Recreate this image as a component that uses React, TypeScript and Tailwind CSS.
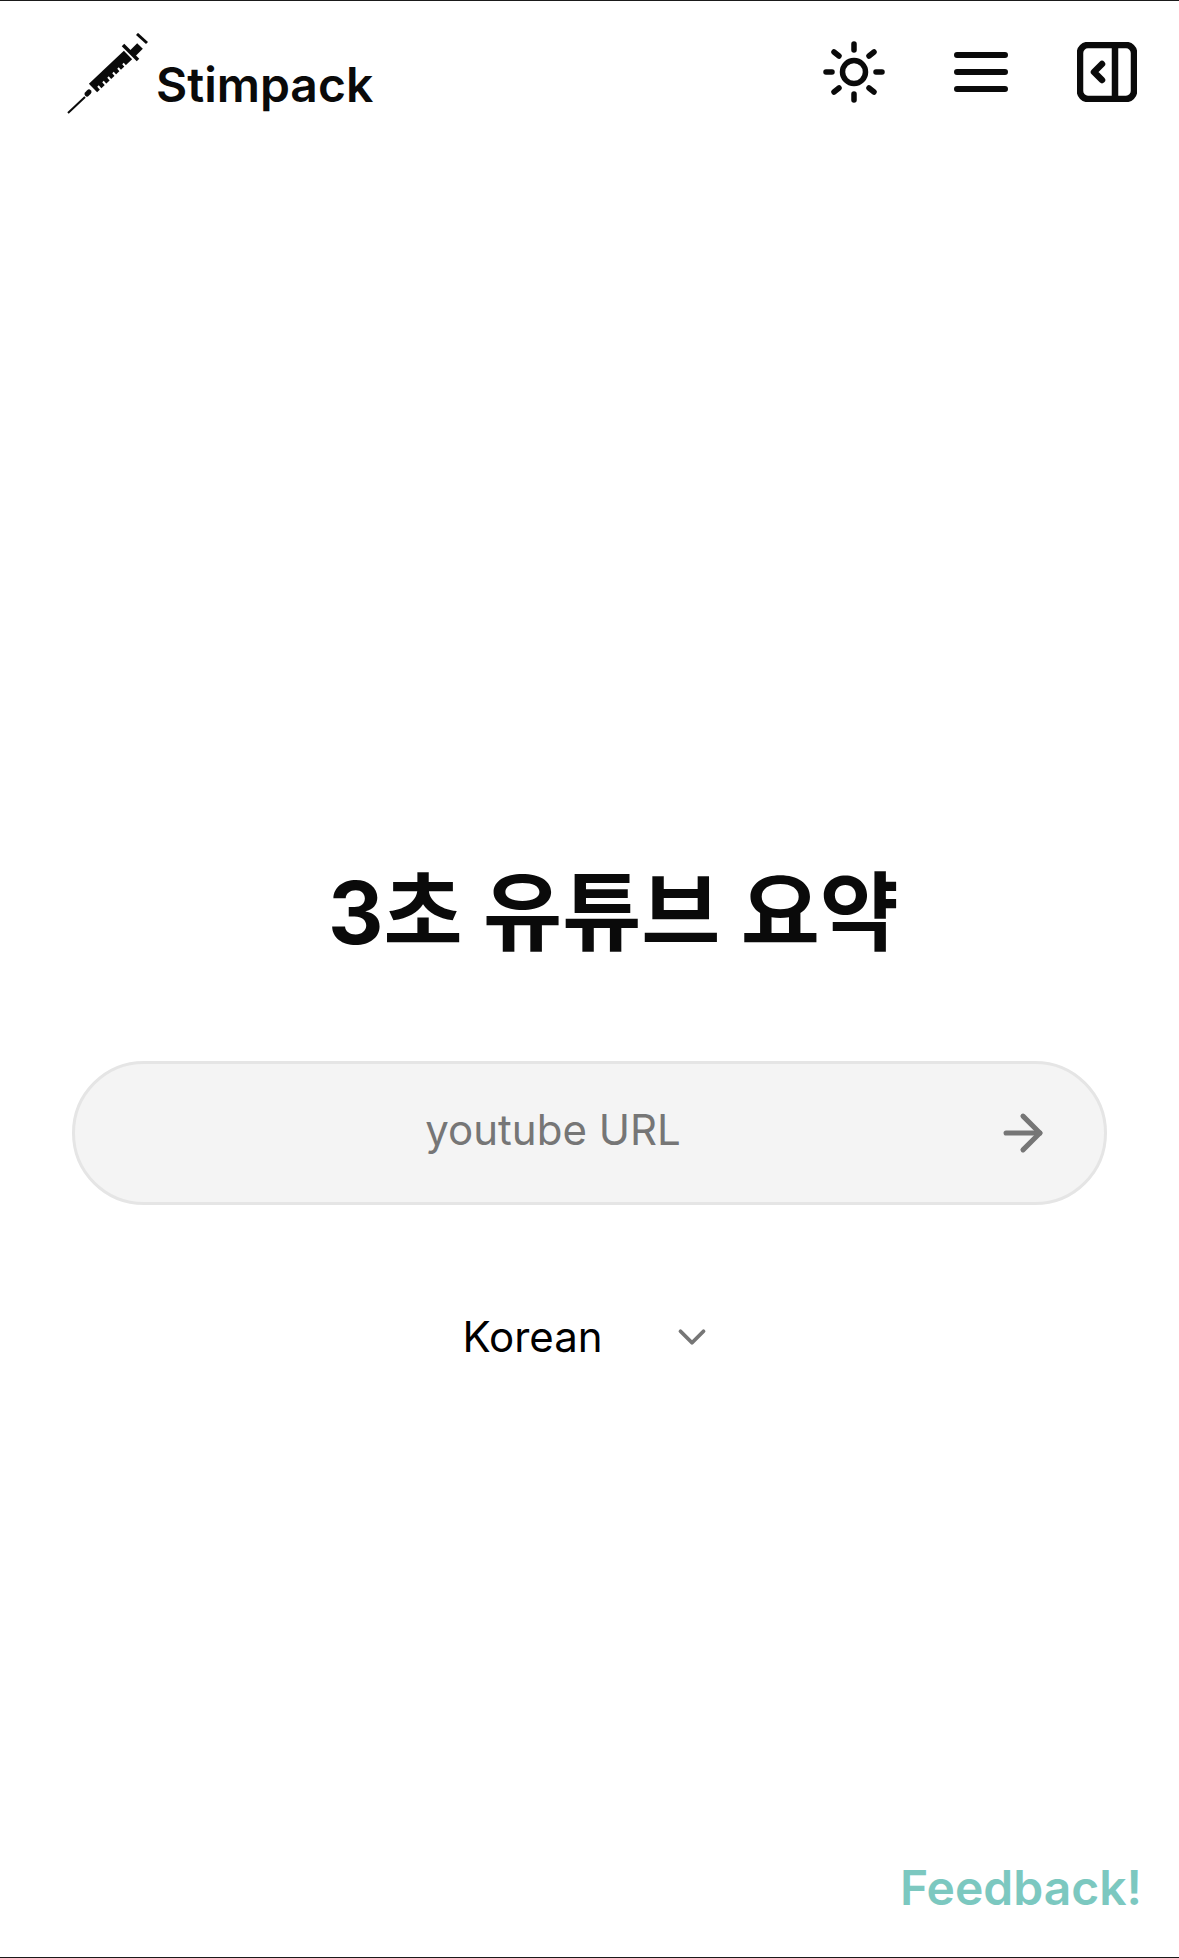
import { ArrowRight, ChevronDown } from 'lucide-react'

function SyringeLogo() {
  return (
    <svg viewBox="0 0 82 82" className="w-[82px] h-[82px]" fill="none">
      <g stroke="#0a0a0a" strokeLinecap="butt">
        <path d="M1 80 L18 64" strokeWidth="2" />
        <path d="M20 61 L22 59" strokeWidth="5" strokeLinecap="round" />
        <path d="M26 55 L61 22" strokeWidth="12" />
        <path d="M56 12 L71 27" strokeWidth="3.5" />
        <path d="M65 21 L73 13" strokeWidth="8" />
        <path d="M70 1 L80 10" strokeWidth="3" />
      </g>
      <path d="M31 53 l3.5 4 M36 48.5 l3.5 4 M41 44 l3.5 4 M46 39.5 l3.5 4 M51 35 l3.5 4 M56 30.5 l3.5 4" stroke="#fff" strokeWidth="2" />
    </svg>
  )
}

function SunIcon() {
  return (
    <svg viewBox="0 0 62 62" className="w-[62px] h-[62px]" fill="none" stroke="#0a0a0a" strokeWidth="5.5" strokeLinecap="round">
      <circle cx="31" cy="31" r="11.5" />
      <path d="M31 3v6M31 53v6M3 31h6M53 31h6M11 11l5 4M46 47l5 4M11 51l5-4M46 15l5-4" />
    </svg>
  )
}

function MenuIcon() {
  return (
    <svg viewBox="0 0 54 40" className="w-[54px] h-10" fill="none" stroke="#0a0a0a" strokeWidth="6" strokeLinecap="round">
      <path d="M3 3h48M3 20h48M3 37h48" />
    </svg>
  )
}

function PanelIcon() {
  return (
    <svg viewBox="0 0 60 60" className="w-[60px] h-[60px]" fill="none" stroke="#0a0a0a" strokeWidth="6.5" strokeLinecap="round" strokeLinejoin="round">
      <rect x="3" y="3" width="54" height="54" rx="8" />
      <path d="M38 3v54" strokeLinecap="butt" />
      <path d="M25 22l-8 8 8 8" />
    </svg>
  )
}

export default function App() {
  return (
    <div className="h-[1958px] bg-white border-y border-[#1a1a1a] flex flex-col font-['Inter','Noto_Sans_CJK_KR',sans-serif] text-[#0a0a0a]">
      <header className="flex items-start justify-between pl-[67px] pr-[42px] pt-[32px]">
        <div className="flex items-end gap-[7px]">
          <SyringeLogo />
          <span className="text-[48px] leading-[58px] font-semibold mb-[1px]">Stimpack</span>
        </div>
        <div className="flex items-center pt-[8px]">
          <SunIcon />
          <div className="ml-[69px]"><MenuIcon /></div>
          <div className="ml-[69px]"><PanelIcon /></div>
        </div>
      </header>

      <main className="flex-1 flex flex-col items-center pt-[748px]">
        <h1 className="text-[86px] leading-[100px] font-bold pl-[48px]">3초 유튜브 요약</h1>
        <div className="mt-[98px] w-[1035px] h-[144px] rounded-full bg-[#f4f4f4] border-[3px] border-[#e5e5e5] flex items-center pr-[52px]">
          <span className="flex-1 text-center text-[42px] text-[#767676] pl-[37px] mb-[7px]">youtube URL</span>
          <ArrowRight className="w-[58px] h-[58px] text-[#767676]" strokeWidth={2.1} />
        </div>
        <div className="mt-[107px] flex items-center gap-[66px] pr-[2px]">
          <span className="text-[42px] leading-[50px] text-black">Korean</span>
          <ChevronDown className="w-[46px] h-[46px] text-[#767676]" strokeWidth={2} />
        </div>
      </main>

      <footer className="flex justify-end pr-[37px] pb-[40px]">
        <span className="text-[48px] leading-[58px] font-semibold text-[#7cc8c0]">Feedback!</span>
      </footer>
    </div>
  )
}
